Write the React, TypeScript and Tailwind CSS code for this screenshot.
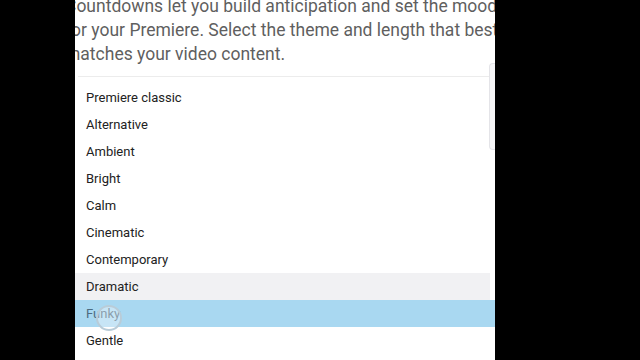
import React from 'react';

const themes = [
  'Premiere classic',
  'Alternative',
  'Ambient',
  'Bright',
  'Calm',
  'Cinematic',
  'Contemporary',
  'Dramatic',
  'Funky',
  'Gentle',
];

const App: React.FC = () => {
  return (
    <div className="w-[640px] h-[360px] bg-black flex overflow-hidden" style={{ fontFamily: 'Roboto, "Noto Sans", sans-serif' }}>
      <div className="ml-[75px] w-[420px] h-full bg-white relative overflow-hidden">
        {/* Description */}
        <div className="-mt-[6px] -ml-[10px] text-[17.5px] leading-[24px] text-[#5f5f5f] whitespace-nowrap">
          <p>Countdowns let you build anticipation and set the mood</p>
          <p>for your Premiere. Select the theme and length that best</p>
          <p>matches your video content.</p>
        </div>

        <div className="mt-[10px] h-px bg-[#ececec] mx-[3px]" />

        {/* Theme list */}
        <ul className="pt-[7px]">
          {themes.map((t) => (
            <li
              key={t}
              className={
                'h-[27px] flex items-center pl-[11px] text-[13px] ' +
                (t === 'Dramatic'
                  ? 'bg-[#f1f1f3] text-[#222222] mr-[5px]'
                  : t === 'Funky'
                  ? 'bg-[#a9d8f1] text-[#4d6b80]'
                  : 'text-[#222222]')
              }
            >
              {t}
            </li>
          ))}
        </ul>

        {/* Scrollbar thumb */}
        <div className="absolute right-0 top-[63px] w-[6px] h-[87px] rounded-l-[4px] border border-r-0 border-[#e4e4e8] bg-[#f6f6f8]" />

        {/* Touch indicator */}
        <div className="absolute left-[21px] top-[305px] w-[26px] h-[26px] rounded-full border-2 border-[#b9ccd8] bg-white/35" />
      </div>
    </div>
  );
};

export default App;
